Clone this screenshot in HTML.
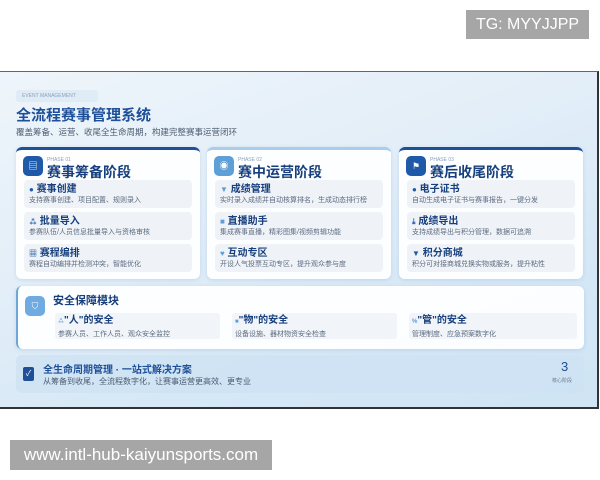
<!DOCTYPE html>
<html><head><meta charset="utf-8"><style>
*{margin:0;padding:0;box-sizing:border-box}
body{width:600px;height:480px;background:#fff;position:relative;overflow:hidden;font-family:"Liberation Sans","Noto Sans CJK SC",sans-serif}
.a{position:absolute}
#tg{left:466px;top:10px;width:123px;height:29px;background:#a6a6a6;color:#fff;font-size:16px;line-height:29px;text-align:center}
#url{left:10px;top:440px;width:262px;height:30px;background:#a6a6a6;color:#fff;font-size:17px;line-height:30px;text-align:center}
#img{left:0;top:71px;width:599px;height:338px;border-top:1px solid #666;border-right:2px solid #333;border-bottom:2px solid #333;background:linear-gradient(160deg,#eef5fb 0%,#e3eef8 40%,#d6e8f6 70%,#cfe4f4 100%)}
.card{background:rgba(255,255,255,.92);border-radius:6px;box-shadow:0 1px 4px rgba(80,130,190,.2)}
.ph{border-top:3px solid #1f4f96}
.ph2{border-top:3px solid #a9cdea}
.ic{width:20px;height:20px;border-radius:5px;background:#1e5aa8;color:#fff;font-size:9px;text-align:center;line-height:20px}
.ic2{background:#5d9fd6}
.pl{font-size:5px;color:#8aa2bd}
.pt{font-size:14px;font-weight:bold;color:#173f7d}
.it{background:#eff3f8;border-radius:4px;width:168px;height:28px;padding:3px 5px}
.it b{display:block;font-size:10px;color:#173f7d;line-height:13px}
.it i{font-style:normal;color:#1e5aa8;font-size:8px}
.it span{display:block;font-size:7px;color:#5c6b7e;line-height:10px;white-space:nowrap}
.s{padding:2px 3px}
.s b{font-size:10px;color:#173f7d;line-height:12px;display:block}
.s span{display:block;font-size:7px;color:#5c6b7e;margin-top:1px}
</style></head><body>
<div class="a" id="tg">TG: MYYJJPP</div>
<div class="a" id="img">
 <div class="a" style="left:16px;top:18px;width:82px;height:12px;background:rgba(220,232,244,.8);border-radius:3px;font-size:5px;color:#8aa2bd;line-height:12px;padding-left:6px">EVENT MANAGEMENT</div>
 <div class="a" style="left:16px;top:36px;font-size:15px;line-height:16px;font-weight:bold;color:#1e4f98">全流程赛事管理系统</div>
 <div class="a" style="left:16px;top:55px;font-size:8.5px;line-height:10px;color:#4b5b70">覆盖筹备、运营、收尾全生命周期，构建完整赛事运营闭环</div>

 <div class="a card ph" style="left:16px;top:75px;width:184px;height:132px"></div>
 <div class="a card ph2" style="left:207px;top:75px;width:184px;height:132px"></div>
 <div class="a card ph" style="left:399px;top:75px;width:184px;height:132px"></div>

 <div class="a ic" style="left:23px;top:84px">▤</div>
 <div class="a pl" style="left:47px;top:85px">PHASE 01</div>
 <div class="a pt" style="left:47px;top:90px">赛事筹备阶段</div>
 <div class="a ic ic2" style="left:214px;top:84px">◉</div>
 <div class="a pl" style="left:238px;top:85px">PHASE 02</div>
 <div class="a pt" style="left:238px;top:90px">赛中运营阶段</div>
 <div class="a ic" style="left:406px;top:84px">⚑</div>
 <div class="a pl" style="left:430px;top:85px">PHASE 03</div>
 <div class="a pt" style="left:430px;top:90px">赛后收尾阶段</div>

 <div class="a it" style="left:24px;top:108px"><b><i>●</i> 赛事创建</b><span>支持赛事创建、项目配置、规则录入</span></div>
 <div class="a it" style="left:24px;top:140px"><b><i>⁂</i> 批量导入</b><span>参赛队伍/人员信息批量导入与资格审核</span></div>
 <div class="a it" style="left:24px;top:172px"><b><i>▦</i> 赛程编排</b><span>赛程自动编排并检测冲突，智能优化</span></div>

 <div class="a it" style="left:215px;top:108px"><b><i style="color:#5d9fd6">▼</i> 成绩管理</b><span>实时录入成绩并自动核算排名，生成动态排行榜</span></div>
 <div class="a it" style="left:215px;top:140px"><b><i style="color:#5d9fd6">■</i> 直播助手</b><span>集成赛事直播，精彩图集/视频剪辑功能</span></div>
 <div class="a it" style="left:215px;top:172px"><b><i style="color:#5d9fd6">♥</i> 互动专区</b><span>开设人气投票互动专区，提升观众参与度</span></div>

 <div class="a it" style="left:407px;top:108px"><b><i>●</i> 电子证书</b><span>自动生成电子证书与赛事报告，一键分发</span></div>
 <div class="a it" style="left:407px;top:140px"><b><i>⤓</i> 成绩导出</b><span>支持成绩导出与积分管理，数据可追溯</span></div>
 <div class="a it" style="left:407px;top:172px"><b><i>▼</i> 积分商城</b><span>积分可对接商城兑换实物或服务，提升粘性</span></div>

 <div class="a card" style="left:16px;top:214px;width:568px;height:63px;border-left:2px solid #6ea6d8"></div>
 <div class="a ic ic2" style="left:25px;top:224px;width:20px;height:20px;background:#6fabe0">⛉</div>
 <div class="a" style="left:53px;top:220px;font-size:11px;font-weight:bold;color:#173f7d">安全保障模块</div>
 <div class="a s" style="left:55px;top:241px;width:165px;height:26px;background:#f1f5f9;border-radius:3px"><b><span style="display:inline;color:#5d9fd6;font-size:6px">⁂</span>"人"的安全</b><span>参赛人员、工作人员、观众安全监控</span></div>
 <div class="a s" style="left:232px;top:241px;width:165px;height:26px;background:#f1f5f9;border-radius:3px"><b><span style="display:inline;color:#5d9fd6;font-size:6px">■</span>"物"的安全</b><span>设备设施、器材物资安全检查</span></div>
 <div class="a s" style="left:409px;top:241px;width:168px;height:26px;background:#f1f5f9;border-radius:3px"><b><span style="display:inline;color:#5d9fd6;font-size:6px">%</span>"管"的安全</b><span>管理制度、应急预案数字化</span></div>

 <div class="a" style="left:16px;top:283px;width:568px;height:38px;background:rgba(205,225,243,.75);border-radius:6px"></div>
 <div class="a" style="left:23px;top:295px;width:11px;height:14px;background:#1e4f98;border-radius:2px;color:#fff;font-size:8px;text-align:center;line-height:14px">✓</div>
 <div class="a" style="left:43px;top:289px;font-size:10px;font-weight:bold;color:#1e4f98">全生命周期管理 · 一站式解决方案</div>
 <div class="a" style="left:43px;top:304px;font-size:8px;color:#4b5b70">从筹备到收尾，全流程数字化，让赛事运营更高效、更专业</div>
 <div class="a" style="left:561px;top:287px;font-size:13px;color:#1e4f98">3</div>
 <div class="a" style="left:552px;top:305px;font-size:5px;color:#6a7a8e">核心阶段</div>
</div>
<div class="a" id="url">www.intl-hub-kaiyunsports.com</div>
</body></html>
